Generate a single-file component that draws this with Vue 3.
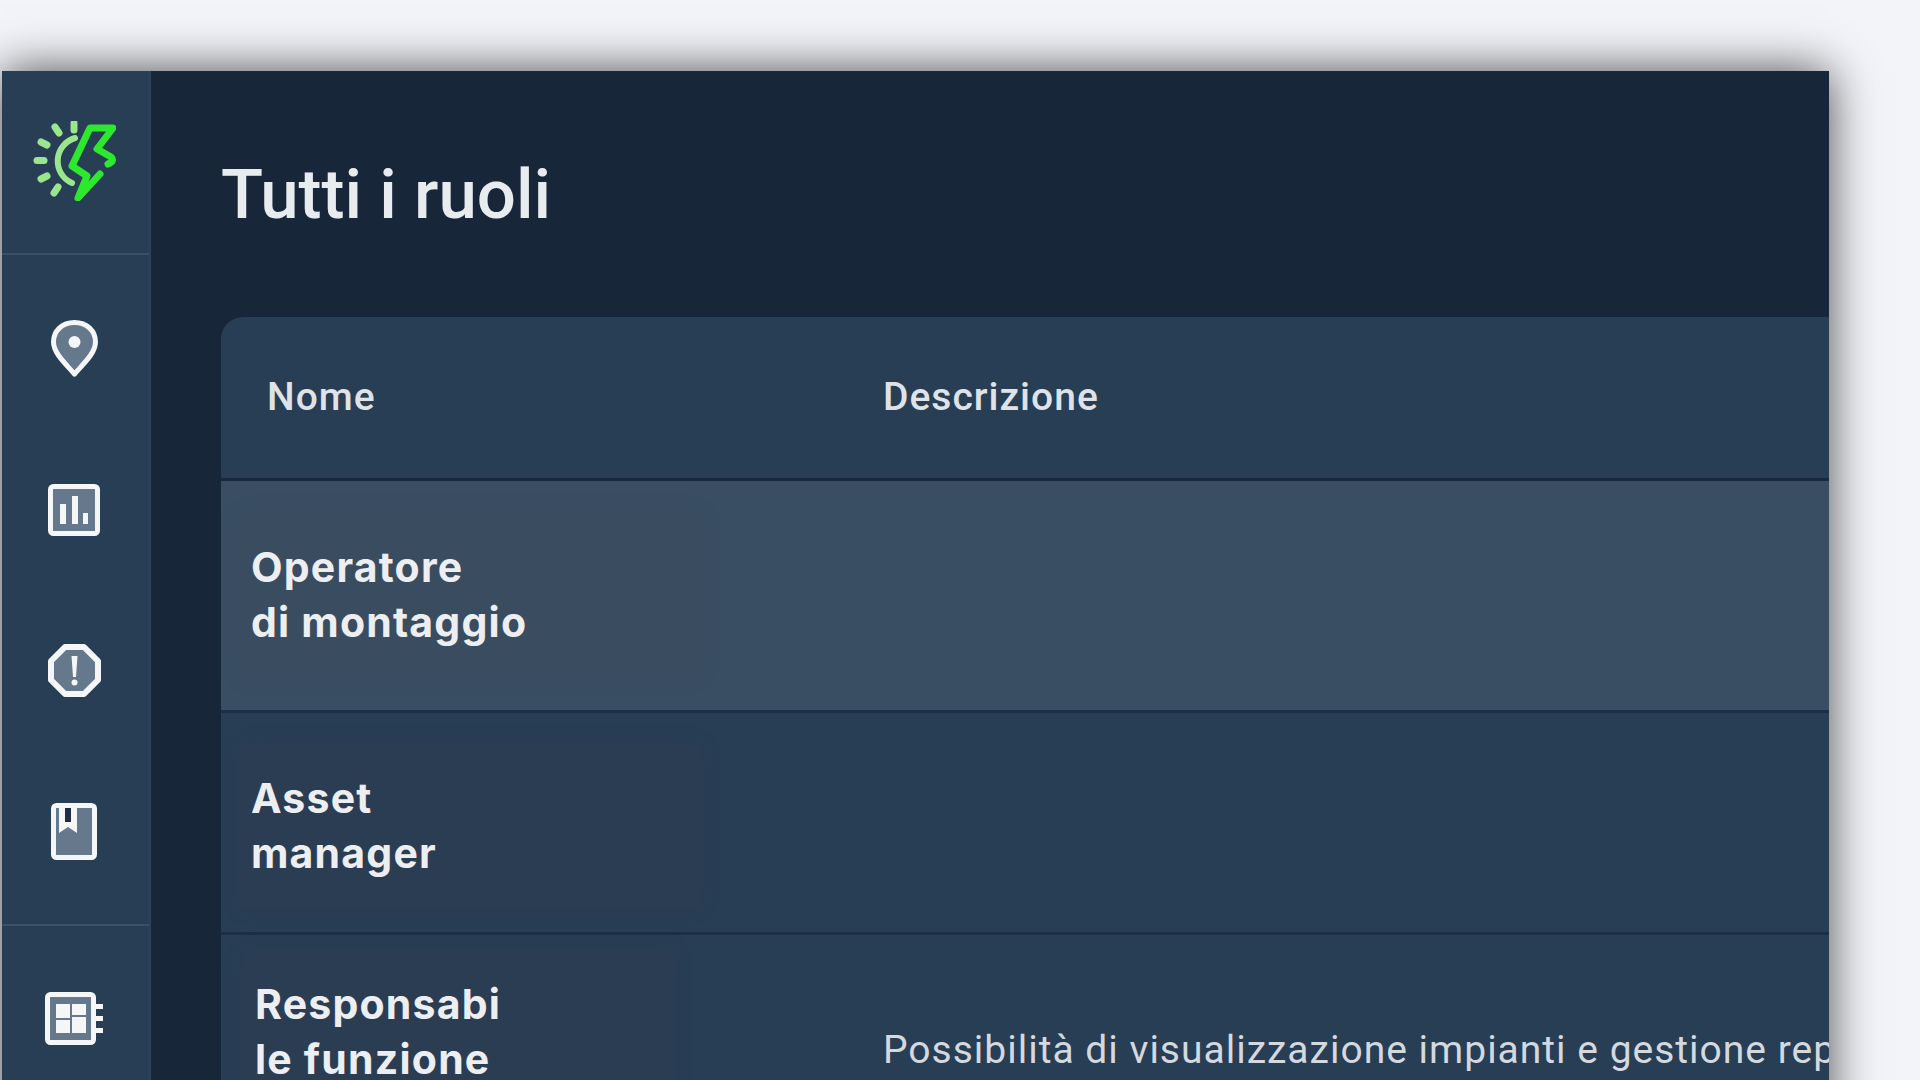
<template>
  <div class="page">
    <div class="window">
      <aside class="sidebar">
        <div class="logo-box">
          <svg class="logo" viewBox="0 0 83 80" fill="none" stroke-linecap="round" stroke-linejoin="round">
            <g stroke="#9be58f">
              <path d="M42 17A24 24 0 0 0 39 62" stroke-width="6" />
              <path d="M4 39.500h7" stroke-width="7" />
              <path d="M8 21l6 3" stroke-width="7" />
              <path d="M22 6l4 6" stroke-width="7" />
              <path d="M41 2v7" stroke-width="7" />
              <path d="M8 58l6-3" stroke-width="7" />
              <path d="M21 72l4-6" stroke-width="7" />
            </g>
            <path d="M75 43Q82 40 78 36L64 28L80 7H57L39 45L54 55L45 77L67 53" stroke="#2ee82e" stroke-width="7" />
          </svg>
        </div>
        <nav class="nav-main">
          <div class="nav-item">
            <svg width="47" height="57" viewBox="0 0 47 57">
              <path d="M23.500 2.500C11 2.500 2.500 11 2.500 22C2.500 33 14 43 23.500 54C33 43 44.500 33 44.500 22C44.500 11 36 2.500 23.500 2.500Z" fill="#66788c" stroke="#f4f6f8" stroke-width="5" stroke-linejoin="round" />
              <circle cx="23.500" cy="22" r="6" fill="#f4f6f8" />
            </svg>
          </div>
          <div class="nav-item">
            <svg width="52" height="52" viewBox="0 0 52 52">
              <rect x="2.500" y="2.500" width="47" height="47" rx="3" fill="#66788c" stroke="#f4f6f8" stroke-width="5" />
              <path d="M12 20h6v20h-6zM24 12h6v28h-6zM35 29h5v11h-5z" fill="#f4f6f8" />
            </svg>
          </div>
          <div class="nav-item">
            <svg width="53" height="53" viewBox="0 0 53 53">
              <path d="M17 3H36L50 17V36L36 50H17L3 36V17Z" fill="#66788c" stroke="#f4f6f8" stroke-width="6" stroke-linejoin="round" />
              <path d="M23.500 12h6l-1.500 21h-3z" fill="#f4f6f8" />
              <circle cx="26.500" cy="38.500" r="3" fill="#f4f6f8" />
            </svg>
          </div>
          <div class="nav-item">
            <svg width="46" height="57" viewBox="0 0 46 57">
              <rect x="2.500" y="2.500" width="41" height="52" rx="3" fill="#66788c" stroke="#f4f6f8" stroke-width="5" />
              <path d="M8 5H26V30L17 24L8 30Z" fill="#f4f6f8" />
              <rect x="14" y="5" width="6" height="14" fill="#1d2e45" />
            </svg>
          </div>
        </nav>
        <div class="nav-bottom">
          <svg width="58" height="53" viewBox="0 0 58 53">
            <rect x="2.500" y="2.500" width="46" height="48" rx="3" fill="#66788c" stroke="#f4f6f8" stroke-width="5" />
            <path d="M11 12h14v14h-14zM27 12h14v11h-14zM11 28h14v13h-14zM27 25h14v16h-14z" fill="#f4f6f8" />
            <path d="M51 12h7v5h-7zM51 24h7v5h-7zM51 36h7v5h-7z" fill="#f4f6f8" />
          </svg>
        </div>
      </aside>
      <main class="content">
        <h1>Tutti i ruoli</h1>
        <section class="table">
          <div class="head">
            <span class="name-col head-name">Nome</span>
            <span>Descrizione</span>
          </div>
          <div v-for="role in roles" :key="role.id" class="row" :class="[role.kind]">
            <div class="name-col name-cell">
              <span class="name-text">{{ role.first }}<br />{{ role.second }}</span>
            </div>
            <div class="desc-cell">{{ role.description }}</div>
          </div>
        </section>
      </main>
    </div>
  </div>
</template>

<script setup>
const roles = [
  { id: 1, kind: "hovered", first: "Operatore", second: "di montaggio", description: "" },
  { id: 2, kind: "asset", first: "Asset", second: "manager", description: "" },
  {
    id: 3,
    kind: "lead",
    first: "Responsabi",
    second: "le funzione",
    description: "Possibilità di visualizzazione impianti e gestione reportistica",
  },
];
</script>

<style>
html,
body {
  margin: 0;
  height: 100%;
  overflow: hidden;
  background: #f3f4f9;
}
</style>

<style scoped>
.page {
  width: 1920px;
  height: 1080px;
  padding: 71px 0 0 2px;
  box-sizing: border-box;
  overflow: hidden;
  background: #f3f4f9;
  font-family: Roboto, "Liberation Sans", sans-serif;
}

.window {
  display: flex;
  width: 1827px;
  height: 1100px;
  overflow: hidden;
  background: #18263a;
  box-shadow: 0 0 45px rgba(0, 0, 0, 0.7);
}

.sidebar {
  flex: 0 0 149px;
  box-sizing: border-box;
  display: flex;
  flex-direction: column;
  background: #283e54;
  border-right: 2px solid #2e4259;
}

.logo-box {
  flex: none;
  height: 184px;
  display: flex;
  align-items: center;
  justify-content: center;
  padding: 0 3px 2px 0;
  box-sizing: border-box;
  border-bottom: 2px solid #3b5066;
}

.logo {
  width: 83px;
  height: 80px;
}

.nav-main {
  flex: none;
  padding: 13px 0 12px;
  border-bottom: 2px solid #3b5066;
}

.nav-item {
  height: 161px;
  display: flex;
  align-items: center;
  justify-content: center;
  padding-right: 3px;
  box-sizing: border-box;
}

.nav-bottom {
  display: flex;
  justify-content: center;
  padding: 66px 3px 0 0;
}

.content {
  flex: 1;
  min-width: 0;
  padding: 80px 0 0 70px;
}

h1 {
  margin: 0 0 78px;
  font-size: 69px;
  line-height: 88px;
  font-weight: 500;
  color: #e9ecef;
}

.table {
  border-top-left-radius: 22px;
  background: #283e54;
  overflow: hidden;
}

.head {
  display: flex;
  align-items: center;
  height: 161px;
  padding-bottom: 2px;
  box-sizing: content-box;
  height: 159px;
  border-bottom: 3px solid #18293f;
  color: #dfe3e8;
  font-size: 39px;
  font-weight: 500;
  letter-spacing: 1px;
}

.name-col {
  flex: 0 0 662px;
  box-sizing: border-box;
}

.head-name {
  padding-left: 46px;
}

.row {
  display: flex;
  min-height: 232px;
  border-bottom: 3px solid #1c2f47;
  box-sizing: border-box;
}

.row.asset {
  min-height: 222px;
}

.row.hovered {
  background: #394e63;
}

.name-cell {
  display: flex;
  align-items: center;
  padding-left: 18px;
  font-family: Inter, sans-serif;
  font-size: 41px;
  line-height: 55px;
  font-weight: 700;
  letter-spacing: 1.2px;
  color: #eceef1;
}

.hovered .name-cell {
  padding-bottom: 2px;
}

.asset .name-cell {
  padding-top: 6px;
}

.lead .name-cell {
  padding-left: 22px;
  padding-bottom: 36px;
}

.name-text {
  width: 462px;
  padding: 26px 0 26px 12px;
  box-sizing: border-box;
  background: rgba(70, 55, 75, 0.1);
  box-shadow: 0 0 22px rgba(70, 55, 75, 0.1);
}

.lead .name-text {
  width: 430px;
}

.desc-cell {
  display: flex;
  align-items: center;
  white-space: nowrap;
  color: #d3d9df;
  font-size: 39px;
  letter-spacing: 1px;
}
</style>
